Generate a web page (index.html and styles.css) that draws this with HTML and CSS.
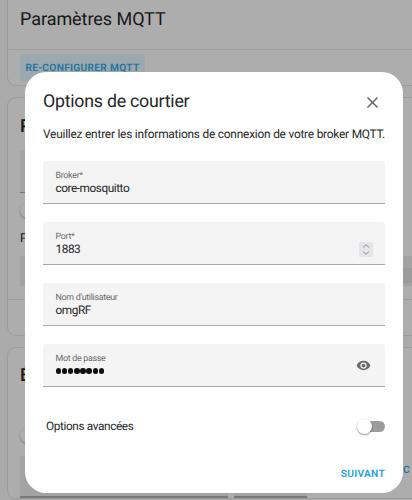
FILE: index.html
```html
<!DOCTYPE html>
<html lang="fr">
<head>
  <meta charset="UTF-8">
  <meta name="viewport" content="width=device-width, initial-scale=1.0">
  <title>Paramètres MQTT</title>
  <link rel="stylesheet" href="styles.css">
</head>
<body>
  <main class="page">
    <section class="card card-settings">
      <h1>Paramètres MQTT</h1>
      <div class="card-actions">
        <button class="reconfigure">RE-CONFIGURER MQTT</button>
      </div>
    </section>

    <section class="card card-publish">
      <h2>P</h2>
      <div class="topic-row">
        <div class="topic"></div>
        <span class="track"></span>
      </div>
      <span class="thumb"></span>
      <p>P</p>
      <div class="payload"><span class="payload-line"></span></div>
      <div class="card-footer"></div>
    </section>

    <section class="card card-listen">
      <h2>É</h2>
      <span class="thumb"></span>
      <div class="listen-row">
        <div class="listen-topic"></div>
        <div class="listen-qos"></div>
        <span class="listen-button">EC</span>
      </div>
    </section>
  </main>

  <div class="scrim">
    <form class="dialog">
      <header>
        <h2>Options de courtier</h2>
        <svg class="close" viewBox="0 0 24 24"><path d="M19 6.41L17.59 5L12 10.59L6.41 5L5 6.41L10.59 12L5 17.59L6.41 19L12 13.41L17.59 19L19 17.59L13.41 12Z"/></svg>
      </header>
      <p class="intro">Veuillez entrer les informations de connexion de votre broker MQTT.</p>

      <div class="field">
        <div class="field-text">
          <label>Broker*</label>
          <span class="value">core-mosquitto</span>
        </div>
      </div>
      <div class="field">
        <div class="field-text">
          <label>Port*</label>
          <span class="value">1883</span>
        </div>
        <svg class="spinner" viewBox="0 0 14 15"><path d="M4 5.5L7 2.7L10 5.5M4 9.5L7 12.3L10 9.5"/></svg>
      </div>
      <div class="field">
        <div class="field-text">
          <label>Nom d'utilisateur</label>
          <span class="value">omgRF</span>
        </div>
      </div>
      <div class="field">
        <div class="field-text">
          <label>Mot de passe</label>
          <span class="dots"><i></i><i></i><i></i><i></i><i></i><i></i><i></i><i></i></span>
        </div>
        <svg class="eye" viewBox="0 0 24 24"><path d="M12 9A3 3 0 0 0 9 12A3 3 0 0 0 12 15A3 3 0 0 0 15 12A3 3 0 0 0 12 9M12 17A5 5 0 0 1 7 12A5 5 0 0 1 12 7A5 5 0 0 1 17 12A5 5 0 0 1 12 17M12 4.5C7 4.5 2.73 7.61 1 12C2.73 16.39 7 19.5 12 19.5C17 19.5 21.27 16.39 23 12C21.27 7.61 17 4.5 12 4.5Z"/></svg>
      </div>

      <div class="advanced">
        <span>Options avancées</span>
        <span class="switch"><span class="knob"></span></span>
      </div>
      <footer><button type="button" class="next">SUIVANT</button></footer>
    </form>
  </div>
</body>
</html>
```
FILE: styles.css
```css
* {
  box-sizing: border-box;
}
body {
  margin: 0;
  height: 500px;
  overflow: hidden;
  background: #aaa;
  font-family: Roboto, "Liberation Sans", sans-serif;
  color: #262626;
  text-rendering: geometricPrecision;
}
h1, h2, p {
  margin: 0;
  font-weight: 400;
}
button {
  border: none;
  font-family: inherit;
  font-weight: 600;
  white-space: nowrap;
  text-rendering: inherit;
}
.page {
  width: 412px;
  padding-left: 7px;
  overflow: hidden;
  color: #171717;
}
.card {
  display: flex;
  flex-direction: column;
  align-items: flex-start;
  margin-bottom: 11px;
  border: 1px solid #9c9c9c;
  border-right: none;
  border-radius: 9px 0 0 9px;
  background: #adadad;
}
.card h1, .card h2 {
  padding-left: 12px;
  font-size: 18px;
  line-height: 24px;
  letter-spacing: -0.05px;
}
.card h2 {
  font-weight: 500;
}
.card-settings {
  height: 86px;
  border-top: none;
  border-radius: 0 0 0 9px;
}
.card-settings h1 {
  height: 49px;
  padding-top: 8px;
}
.card-actions {
  align-self: stretch;
  padding: 4px 12px;
  border-top: 1px solid #9c9c9c;
}
.reconfigure {
  width: 125px;
  height: 27px;
  padding: 1px 0 0;
  border-radius: 3px;
  background: #9ba8ae;
  color: #1f759c;
  font-size: 10.2px;
  letter-spacing: 0.3px;
}
.card-publish {
  height: 239px;
}
.card-publish h2 {
  padding-top: 17px;
  height: 52px;
}
.topic-row {
  display: flex;
  gap: 8px;
  align-items: center;
  margin-left: 12px;
}
.topic {
  width: 355px;
  height: 43px;
  border-bottom: 1px solid #777;
  background: #a5a5a5;
}
.track {
  width: 15px;
  height: 11px;
  border-radius: 6px;
  background: #6c6c6c;
}
.thumb {
  width: 15px;
  height: 15px;
  margin: 10px 0 0 12px;
  border-radius: 50%;
  background: #adadad;
  box-shadow: 0 1px 2px #777;
}
.card-publish p {
  height: 38px;
  padding: 13px 0 0 12px;
  font-size: 12.2px;
}
.payload {
  align-self: stretch;
  height: 30px;
  margin-left: 12px;
  padding-top: 12px;
  background: #a3a3a3;
}
.payload-line {
  display: block;
  height: 15px;
  margin-left: 10px;
  background: #9b9b9b;
}
.card-footer {
  align-self: stretch;
  margin-top: 13px;
  border-top: 1px solid #9c9c9c;
}
.card-listen {
  height: 152px;
}
.card-listen h2 {
  height: 70px;
  padding-top: 16px;
}
.listen-row {
  display: flex;
  gap: 6px;
  margin: 13px 0 0 12px;
}
.listen-topic, .listen-qos {
  width: 208px;
  height: 42px;
  border-bottom: 2px solid #777;
  background: #a3a3a3;
}
.listen-qos {
  width: 73px;
}
.listen-button {
  padding: 9px 0 0 84px;
  color: #1f759c;
  font-size: 10.2px;
  font-weight: 600;
  letter-spacing: 0.35px;
}

/* dialog */
.scrim {
  position: absolute;
  inset: 0;
  padding: 72px 9px 7px 25px;
}
.dialog {
  height: 421px;
  padding: 18px 18px 0;
  border-radius: 21px;
  background: #fff;
}
.dialog header {
  display: flex;
  align-items: center;
  justify-content: space-between;
  height: 24px;
}
.dialog h2 {
  font-size: 17.8px;
  line-height: 24px;
  letter-spacing: -0.25px;
}
.close {
  width: 19px;
  margin-right: 3px;
  fill: #6a6a6a;
}
.intro {
  height: 47px;
  padding-top: 12px;
  font-size: 11.9px;
  line-height: 16px;
  letter-spacing: -0.22px;
  white-space: nowrap;
}
.field {
  display: flex;
  align-items: center;
  justify-content: space-between;
  height: 43px;
  margin-bottom: 18px;
  padding: 0 12px 0 12.5px;
  border-bottom: 1.5px solid #a8a8a8;
  border-radius: 3px 3px 0 0;
  background: #f4f4f4;
}
.field-text {
  display: flex;
  flex-direction: column;
  align-self: flex-start;
  padding-top: 10px;
}
.field label {
  color: #6b6b6b;
  font-size: 8.9px;
  line-height: 11px;
  letter-spacing: -0.3px;
}
.value {
  font-size: 11.8px;
  line-height: 12px;
  letter-spacing: -0.44px;
}
.dots {
  display: flex;
  gap: 0.7px;
  padding-top: 3px;
}
.dots i {
  width: 5.5px;
  height: 5.5px;
  border-radius: 50%;
  background: #111;
}
.spinner {
  width: 14px;
  height: 15px;
  margin-top: 12px;
  background: #e6e6e8;
  fill: none;
  stroke: #8a8a92;
}
.eye {
  width: 15px;
  margin-right: 2px;
  fill: #6a6a6a;
}
.advanced {
  display: flex;
  align-items: center;
  justify-content: space-between;
  height: 42px;
  padding-left: 3px;
  font-size: 11.8px;
  letter-spacing: -0.37px;
}
.switch {
  width: 27px;
  height: 11px;
  border-radius: 6px;
  background: #9c9c9c;
}
.knob {
  display: block;
  width: 15px;
  height: 15px;
  margin: -2px 0 0 -1px;
  border-radius: 50%;
  background: #fff;
  box-shadow: 0 1px 2px rgba(0, 0, 0, 0.45);
}
.dialog footer {
  display: flex;
  justify-content: flex-end;
  padding-top: 21px;
}
.next {
  padding: 0;
  background: none;
  color: #1ba3e0;
  font-size: 10.2px;
  line-height: 14px;
  letter-spacing: 0.3px;
}
```
